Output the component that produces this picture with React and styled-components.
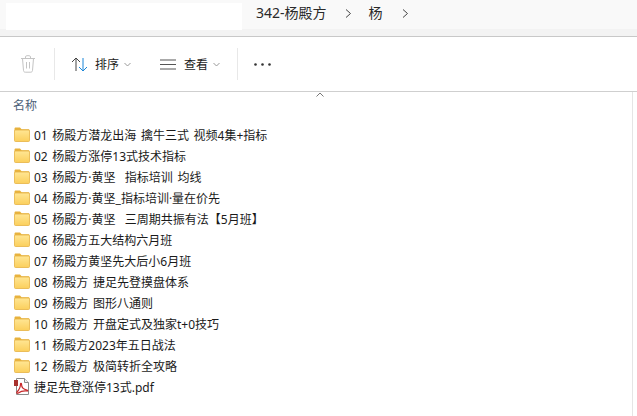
import React from "react";
import styled, { createGlobalStyle } from "styled-components";

const Global = createGlobalStyle`
  html, body { margin: 0; padding: 0; background: #fff; }
  body { font-family: "Noto Sans", "Noto Sans CJK SC", sans-serif; color: #1a1a1a; overflow: hidden; }
`;
const Page = styled.div`width: 637px; height: 416px; display: flex; flex-direction: column; overflow: hidden;`;
const AddressBar = styled.div`height: 36px; background: #f3f3f3; border-bottom: 1px solid #c8c8c8;`;
const AddressInner = styled.div`height: 29px; box-sizing: border-box; padding-bottom: 3px; background: #f9f9f9; display: flex; align-items: center;`;
const Redacted = styled.div`width: 236px; height: 27px; margin: 3px 0 0 6px; background: #fff; align-self: flex-start;`;
const Crumb = styled.span`font-size: 14px; color: #2a2a2a; margin-left: ${p => p.$ml}px; line-height: 26px;`;
const Chevron = styled.svg`width: 7px; height: 9px; margin-left: ${p => p.$ml}px; fill: none; stroke: #444; stroke-width: 1;`;
const Toolbar = styled.div`height: 54px; border-bottom: 1px solid #cfcfcf; display: flex; align-items: center; background: #fff;`;
const Divider = styled.div`width: 1px; height: 32px; background: #e8e8e8; margin-left: ${p => p.$ml}px;`;
const ToolLabel = styled.span`font-size: 12px; color: #1c1c1c; margin-left: ${p => p.$ml}px;`;
const ToolIcon = styled.svg`margin-left: ${p => p.$ml}px; flex: none;`;
const Content = styled.div`flex: 1; display: flex; min-height: 0;`;
const Main = styled.div`flex: 1; position: relative; padding: 6px 0 0 13px;`;
const ScrollRail = styled.div`width: 4px; border-left: 1px solid #e5e5e5;`;
const Header = styled.div`font-size: 12px; line-height: 16px; color: #4c6178; height: 26px;`;
const SortCaret = styled.svg`position: absolute; left: 316px; top: 0; width: 8px; height: 5px; fill: none; stroke: #777;`;
const List = styled.ul`list-style: none; margin: 0; padding: 0; display: flex; flex-direction: column;`;
const Row = styled.li`height: 21px; display: flex; align-items: center; font-size: 12px; word-spacing: 1.5px; white-space: pre; color: #1a1a1a; margin-left: 1px;`;
const Name = styled.span`margin-left: 4px;`;

const Folder = () => (
  <svg width="16" height="15" viewBox="0 0 16 15" style={{ flex: "none" }}>
    <defs>
      <linearGradient id="fold" x1="0" y1="0" x2="0" y2="1">
        <stop offset="0" stopColor="#ffe694" />
        <stop offset="1" stopColor="#fbcf5c" />
      </linearGradient>
    </defs>
    <path d="M0.5 3V1.800C0.500 1 1 .500 1.800 .500H6l1.600 1.800H14.600c.500 0 .900.400.900.900V4H.500z" fill="#e8b23c" />
    <rect x="0.500" y="3" width="15" height="11.500" rx="1" fill="url(#fold)" stroke="#e6b344" strokeWidth="0.800" />
  </svg>
);
const Pdf = () => (
  <svg width="16" height="17" viewBox="0 0 16 17" style={{ flex: "none" }}>
    <path d="M2.500.500h8l4 4v12h-12z" fill="#fff" stroke="#8a8a8a" />
    <path d="M10.500.500v4h4" fill="#eee" stroke="#8a8a8a" />
    <rect x="0" y="2" width="4" height="6" fill="#a8322e" />
    <path d="M3 14c2-2 3.500-5 3.500-8 0-1 1-1 1 0 0 3 2 5.500 5.500 6 1 .200.800 1.200-.200 1-3-.300-6 .200-8.500 2-1 .700-2 0-1.300-1z" fill="none" stroke="#c8282a" strokeWidth="1.200" />
  </svg>
);

const names = [
  "01 杨殿方潜龙出海 擒牛三式 视频4集+指标",
  "02 杨殿方涨停13式技术指标",
  "03 杨殿方·黄坚  指标培训 均线",
  "04 杨殿方·黄坚_指标培训·量在价先",
  "05 杨殿方·黄坚  三周期共振有法【5月班】",
  "06 杨殿方五大结构六月班",
  "07 杨殿方黄坚先大后小6月班",
  "08 杨殿方 捷足先登摸盘体系",
  "09 杨殿方 图形八通则",
  "10 杨殿方 开盘定式及独家t+0技巧",
  "11 杨殿方2023年五日战法",
  "12 杨殿方 极简转折全攻略",
];

export default function App() {
  return (
    <Page>
      <Global />
      <AddressBar>
        <AddressInner>
          <Redacted />
          <Crumb $ml={14}>342-杨殿方</Crumb>
          <Chevron $ml={18} viewBox="0 0 7 9"><path d="M1 .500l4.500 4-4.500 4" /></Chevron>
          <Crumb $ml={17}>杨</Crumb>
          <Chevron $ml={19} viewBox="0 0 7 9"><path d="M1 .500l4.500 4-4.500 4" /></Chevron>
        </AddressInner>
      </AddressBar>
      <Toolbar>
        <ToolIcon $ml={20} width="16" height="18" viewBox="0 0 16 18" fill="none" stroke="#c4c4c4">
          <path d="M1 3.500h14M5.500 3.500V2c0-.800.500-1.300 1.300-1.300h2.400c.800 0 1.300.500 1.300 1.300v1.500M2.500 3.500l1 12c.100 1 .700 1.700 1.700 1.700h5.600c1 0 1.600-.700 1.700-1.700l1-12M6.500 7v6.500M9.500 7v6.500" />
        </ToolIcon>
        <Divider $ml={18} />
        <ToolIcon $ml={16} width="17" height="15" viewBox="0 0 17 15" fill="none">
          <path d="M5 14V1M1 5l4-4 4 4" stroke="#444" />
          <path d="M12 1v13M8 10l4 4 4-4" stroke="#1a86d8" />
        </ToolIcon>
        <ToolLabel $ml={7}>排序</ToolLabel>
        <ToolIcon $ml={5} width="7" height="5" viewBox="0 0 7 5" fill="none" stroke="#999"><path d="M.500 1l3 3 3-3" /></ToolIcon>
        <ToolIcon $ml={29} width="16" height="11" viewBox="0 0 16 11" fill="none" stroke="#555"><path d="M0 1h16M0 5.500h16M0 10h16" /></ToolIcon>
        <ToolLabel $ml={8}>查看</ToolLabel>
        <ToolIcon $ml={5} width="7" height="5" viewBox="0 0 7 5" fill="none" stroke="#999"><path d="M.500 1l3 3 3-3" /></ToolIcon>
        <Divider $ml={17} />
        <ToolIcon $ml={16} width="17" height="3" viewBox="0 0 17 3" fill="#333"><circle cx="1.500" cy="1.500" r="1.300" /><circle cx="8.500" cy="1.500" r="1.300" /><circle cx="15.500" cy="1.500" r="1.300" /></ToolIcon>
      </Toolbar>
      <Content>
        <Main>
          <SortCaret viewBox="0 0 8 5"><path d="M.500 4.500L4 1l3.500 3.500" /></SortCaret>
          <Header>名称</Header>
          <List>
            {names.map(n => <Row key={n}><Folder /><Name>{n}</Name></Row>)}
            <Row><Pdf /><Name>捷足先登涨停13式.pdf</Name></Row>
          </List>
        </Main>
        <ScrollRail />
      </Content>
    </Page>
  );
}
